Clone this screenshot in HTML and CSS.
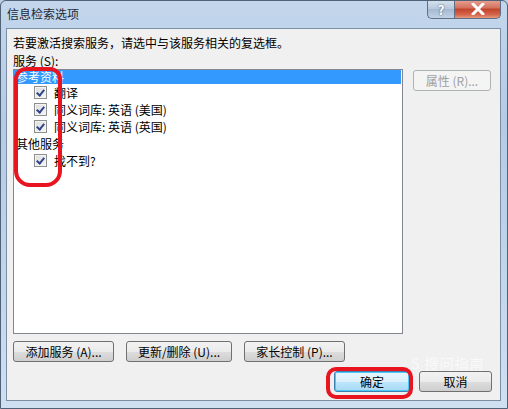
FILE: index.html
```html
<!DOCTYPE html>
<html lang="zh-CN">
<head>
  <meta charset="UTF-8" />
  <title>信息检索选项</title>
  <link rel="stylesheet" href="styles.css">
</head>
<body>

  <div class="window">
    <!-- Title Bar -->
    <div class="titlebar">
      <span class="title">信息检索选项</span>
      <div class="caption-buttons">
        <span class="cap-btn help">?</span>
        <span class="cap-btn close">
          <svg width="14" height="12" viewBox="0 0 14 12"><path d="M2 1 L12 11 M12 1 L2 11" stroke="#fff" stroke-width="3" stroke-linecap="round"/></svg>
        </span>
      </div>
    </div>

    <!-- Client Area -->
    <div class="client">
      <div class="intro">若要激活搜索服务，请选中与该服务相关的复选框。</div>
      <div class="label">服务 (<u>S</u>):</div>

      <div class="service-row">
        <div class="listbox">
          <div class="group selected">参考资料</div>
          <div class="item"><span class="check"></span>翻译</div>
          <div class="item"><span class="check"></span>同义词库: 英语 (美国)</div>
          <div class="item"><span class="check"></span>同义词库: 英语 (英国)</div>
          <div class="group">其他服务</div>
          <div class="item"><span class="check"></span>找不到?</div>
        </div>
        <button class="btn disabled">属性 (<u>R</u>)...</button>
      </div>

      <div class="action-row">
        <button class="btn wide">添加服务 (<u>A</u>)...</button>
        <button class="btn wide update">更新/删除 (<u>U</u>)...</button>
        <button class="btn wide">家长控制 (<u>P</u>)...</button>
      </div>

      <div class="footer-row">
        <button class="btn default">确定</button>
        <button class="btn">取消</button>
      </div>
    </div>

    <!-- annotation marks -->
    <div class="mark mark-checks"></div>
    <div class="mark mark-ok"></div>
    <div class="watermark">S 搜问指南</div>
  </div>

</body>
</html>
```

FILE: styles.css
```css
body {
  margin: 0;
  font-family: "Noto Sans CJK SC", "Liberation Sans", sans-serif;
  font-size: 12px;
  color: #000;
  background-color: #b9cfe7;
}

/* Window Frame */
.window {
  position: relative;
  width: 508px;
  height: 409px;
  box-sizing: border-box;
  background: linear-gradient(to bottom, #c3d6ec 0%, #b4cbe6 30%, #c2d6ec 70%, #cfe0f1 100%);
  border: 1px solid #4f6276;
  border-radius: 6px 6px 0 0;
  display: flex;
  flex-direction: column;
  overflow: hidden;
}

/* Title Bar */
.titlebar {
  height: 27px;
  display: flex;
  align-items: flex-start;
  justify-content: space-between;
  padding-left: 6px;
}

.title {
  margin-top: 4px;
  font-size: 12px;
  color: #1c2a3a;
}

.caption-buttons {
  display: flex;
  margin-right: 6px;
  margin-top: -1px;
}

.cap-btn {
  height: 19px;
  display: flex;
  align-items: center;
  justify-content: center;
  border: 1px solid #5e6f86;
  border-top: none;
  box-sizing: border-box;
}

.help {
  width: 27px;
  border-radius: 0 0 0 5px;
  border-right: none;
  background: linear-gradient(to bottom, #d8e3ef 0%, #b7c8dc 50%, #a4b8d0 51%, #c0d2e6 100%);
  color: #fff;
  font-weight: bold;
  font-size: 13px;
  text-shadow: 0 0 2px #34475e;
}

.close {
  width: 47px;
  border-radius: 0 0 5px 0;
  background: linear-gradient(to bottom, #e8a294 0%, #d3705c 45%, #c1432a 50%, #d4634a 80%, #e59a7e 100%);
}

/* Client Area */
.client {
  flex: 1;
  margin: 0 6px 7px 5px;
  border: 1px solid #7b8ea4;
  background-color: #f0f0f0;
  padding: 5px 8px 0 6px;
  display: flex;
  flex-direction: column;
}

.intro {
  height: 18px;
  line-height: 18px;
}

.label {
  height: 17px;
  line-height: 17px;
}

.label u,
.btn u {
  text-decoration: none;
}

.service-row {
  display: flex;
  gap: 10px;
  align-items: flex-start;
}

.listbox {
  width: 390px;
  height: 265px;
  background: #fff;
  border: 1px solid #828790;
  padding: 0;
  box-sizing: border-box;
}

.group {
  height: 17px;
  line-height: 17px;
  padding-left: 2px;
}

.group.selected {
  height: 14px;
  line-height: 14px;
  background-color: #3399ff;
  color: #fff;
  margin: 0 1px 0 0;
}

.item {
  height: 17px;
  line-height: 17px;
  display: flex;
  align-items: center;
  padding-left: 20px;
}

.check {
  width: 11px;
  height: 11px;
  border: 1px solid #8e8f8f;
  margin-right: 7px;
  background: linear-gradient(135deg, #dcdcdc 0%, #f6f6f6 100%);
  position: relative;
  box-shadow: inset 0 0 0 1px #f4f4f4;
}

.check::after {
  content: "";
  position: absolute;
  left: 3px;
  top: 1px;
  width: 3px;
  height: 6px;
  border: solid #31438b;
  border-width: 0 2px 2px 0;
  transform: rotate(40deg);
}

/* Buttons */
.btn {
  font-family: inherit;
  font-size: 12px;
  height: 21px;
  padding: 0 6px;
  border: 1px solid #707070;
  border-radius: 3px;
  background: linear-gradient(to bottom, #f2f2f2 0%, #ebebeb 50%, #dddddd 51%, #cfcfcf 100%);
  color: #000;
  white-space: nowrap;
  cursor: pointer;
}

.btn.disabled {
  width: 78px;
  border-color: #adb2b5;
  background: #f4f4f4;
  color: #a0a0a0;
  margin-top: 1px;
}

.action-row {
  display: flex;
  gap: 12px;
  margin-top: 7px;
}

.btn.wide {
  width: 101px;
}

.btn.wide.update {
  width: 106px;
}

.footer-row {
  display: flex;
  justify-content: flex-end;
  gap: 9px;
  margin-top: 9px;
}

.footer-row .btn {
  width: 73px;
}

.btn.default {
  width: 76px;
  border-color: #3c7fb1;
  background: linear-gradient(to bottom, #eaf6fd 0%, #d9f0fc 50%, #bee6fd 51%, #a7d9f5 100%);
  box-shadow: inset 0 0 0 1px #48cbf7;
}

/* Annotation marks */
.mark {
  position: absolute;
  border: 4px solid #e8141f;
  box-sizing: border-box;
}

.mark-checks {
  left: 13px;
  top: 66px;
  width: 48px;
  height: 120px;
  border-radius: 12px 12px 16px 16px;
}

.mark-ok {
  left: 325px;
  top: 366px;
  width: 87px;
  height: 32px;
  border-radius: 10px;
}

.watermark {
  position: absolute;
  left: 410px;
  top: 352px;
  color: rgba(255, 255, 255, 0.7);
  font-size: 14px;
  letter-spacing: 1px;
}
```
